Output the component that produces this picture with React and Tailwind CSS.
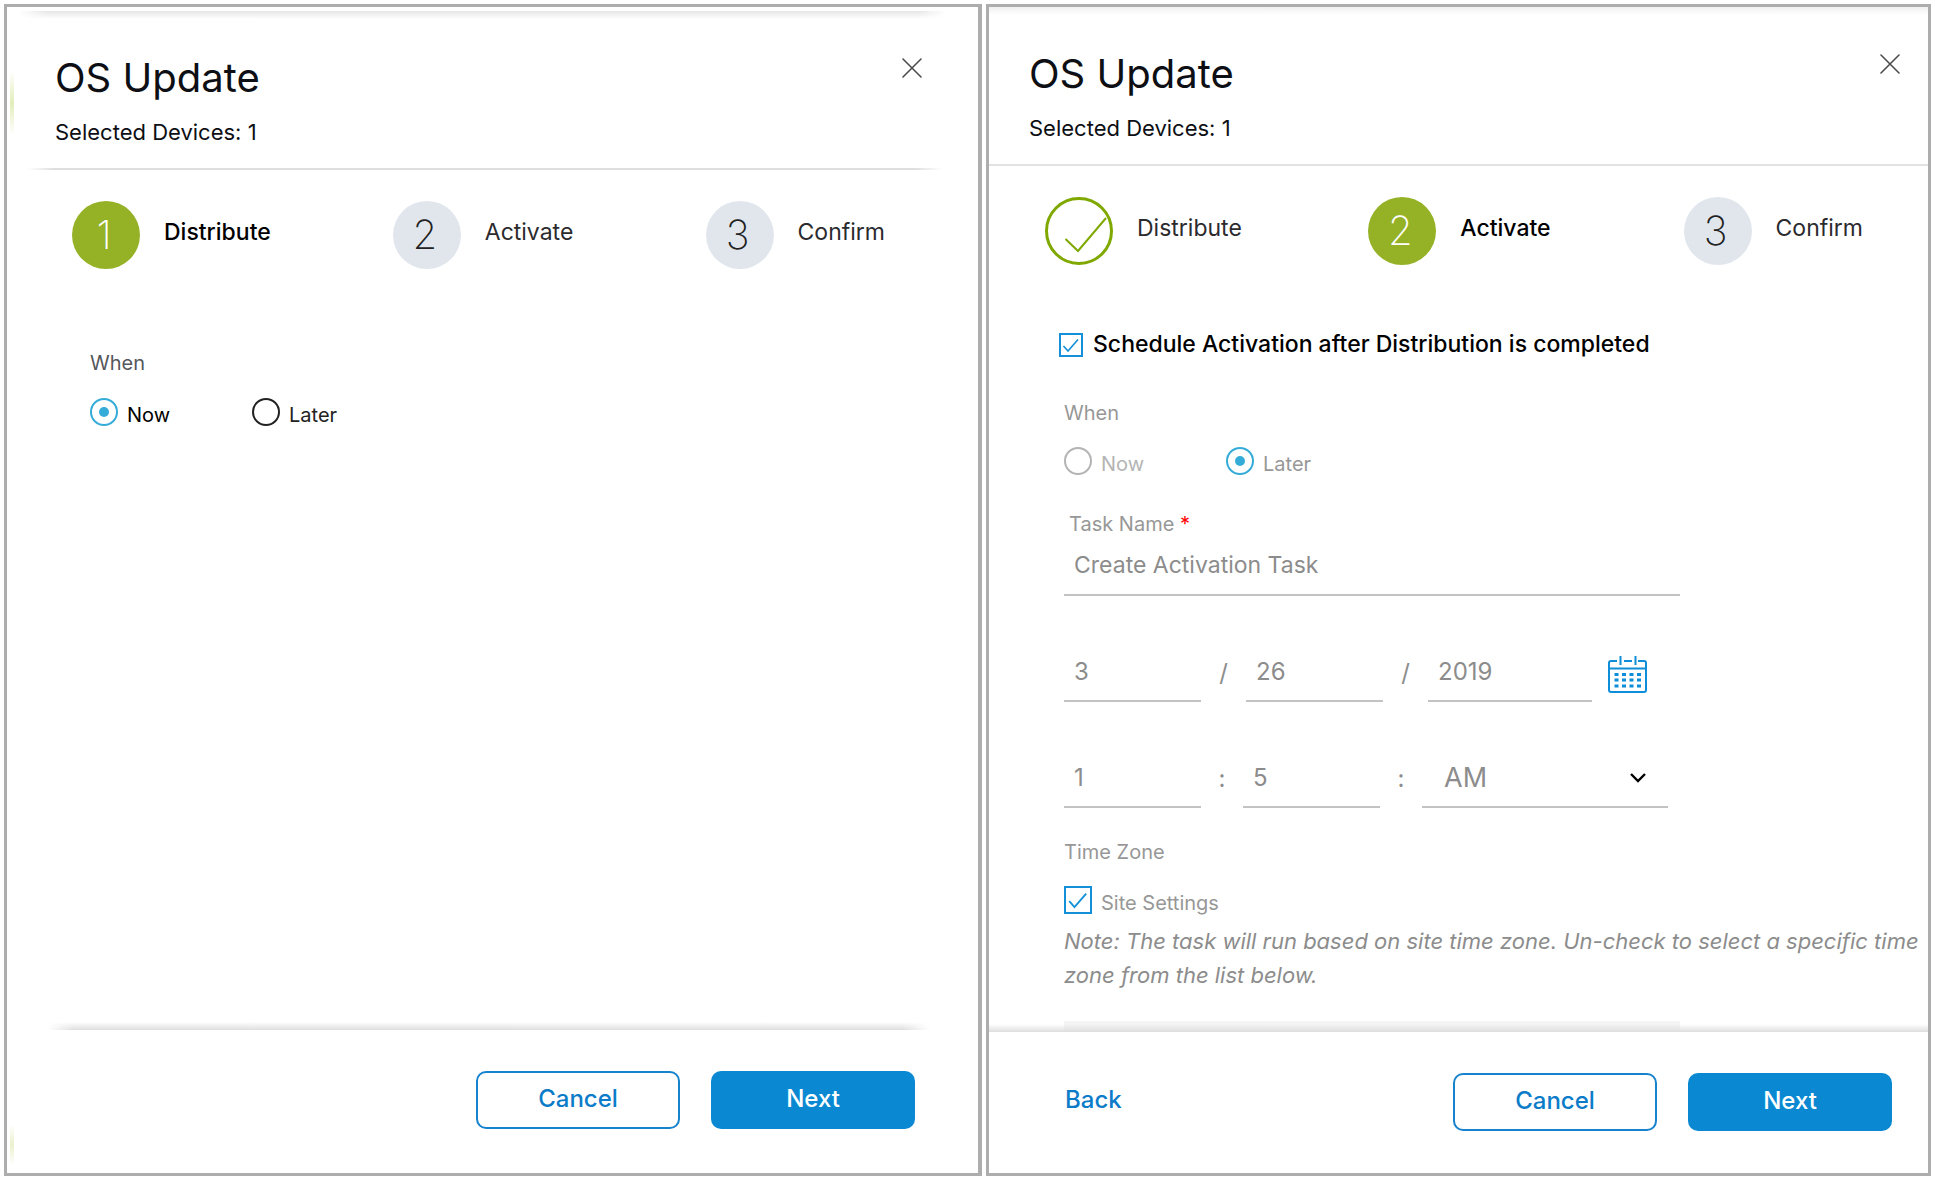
import React, { useState } from 'react'

const steps = ['Distribute', 'Activate', 'Confirm']

function StepCircle({ number, current }) {
  if (number < current) {
    return (
      <svg className="size-[68px] shrink-0" viewBox="0 0 68 68" fill="none" stroke="#7fa800">
        <circle cx="34" cy="34" r="32.5" strokeWidth="3" />
        <path d="M20.5 42 L33 54 L61 21" strokeWidth="2" />
      </svg>
    )
  }

  return (
    <span
      className={`flex size-[68px] shrink-0 items-center justify-center rounded-full pr-1 text-[40px] font-extralight ${
        number === current ? 'bg-[#95b226] text-white' : 'bg-[#e1e6ed] text-[#222222]'
      }`}
    >
      {number}
    </span>
  )
}

function Steps({ current }) {
  return (
    <ol className="mt-[31px] grid grid-cols-[321fr_313fr_auto]">
      {steps.map((step, index) => (
        <li key={step} className="flex items-center gap-6">
          <StepCircle number={index + 1} current={current} />
          <span
            className={`pb-[6px] text-[23px] leading-7 ${
              index + 1 === current ? 'font-medium text-black' : 'text-[#2b2b2e]'
            }`}
          >
            {step}
          </span>
        </li>
      ))}
    </ol>
  )
}

function CloseButton() {
  return (
    <button type="button" aria-label="Close" className="size-5 cursor-pointer">
      <svg viewBox="0 0 20 20" className="size-5" fill="none" stroke="#4d4d4f" strokeWidth="1.6" strokeLinecap="round">
        <path d="M1 1 L19 19 M19 1 L1 19" />
      </svg>
    </button>
  )
}

function Radio({ label, ringClass, textClass, ...props }) {
  return (
    <label className={`flex w-[162px] gap-[9px] text-[20px] leading-7 ${textClass}`}>
      <input
        type="radio"
        className={`grid size-7 shrink-0 appearance-none place-content-center rounded-full border-2 before:size-[10px] before:rounded-full checked:border-[#35acd8] checked:before:bg-[#35acd8] ${ringClass}`}
        {...props}
      />
      <span className="pt-[3px]">{label}</span>
    </label>
  )
}

function Checkbox({ id, sizeClass }) {
  return (
    <span className={`grid shrink-0 ${sizeClass}`}>
      <input
        id={id}
        type="checkbox"
        defaultChecked
        className="peer col-start-1 row-start-1 size-full appearance-none border-2 border-[#1490d8]"
      />
      <svg
        className="pointer-events-none invisible col-start-1 row-start-1 size-full peer-checked:visible"
        viewBox="0 0 24 24"
        fill="none"
        stroke="#1490d8"
        strokeWidth="1.6"
      >
        <path d="M4.5 13 L9 18 L19 6.5" />
      </svg>
    </span>
  )
}

function CalendarIcon() {
  return (
    <svg viewBox="0 0 39 37" className="h-[37px] w-[39px]" fill="none" stroke="#0e8ed8" strokeWidth="2">
      <path d="M9 5 H3 Q1 5 1 7 V12 M16 5 H24 M30 5 H36 Q38 5 38 7 V12" />
      <path d="M12.5 0 V9 M27.5 0 V9" />
      <path d="M1 12.5 H38 V34 Q38 36 36 36 H3 Q1 36 1 34 Z" />
      <path d="M6.5 18.5 H33 M6.5 24 H33 M6.5 30 H33" strokeWidth="3" strokeDasharray="4 3.5" />
    </svg>
  )
}

function Footer({ onBack, lineClass, barClass }) {
  return (
    <div>
      <div className={`-mt-2 h-2 bg-linear-to-b from-transparent to-[#dedede] ${lineClass}`} />
      <div className={`flex items-center gap-[31px] pt-[41px] pl-[76px] text-[24px] ${barClass}`}>
        {onBack && (
          <button type="button" onClick={onBack} className="cursor-pointer pb-1 font-medium text-[#0c7cc9]">
            Back
          </button>
        )}
        <button
          type="button"
          className="ml-auto h-[58px] w-[204px] cursor-pointer rounded-[10px] border-2 border-[#1783cd] pb-[2px] font-medium text-[#0c7cc9]"
        >
          Cancel
        </button>
        <button
          type="button"
          className="h-[58px] w-[204px] cursor-pointer rounded-[10px] bg-[#0a89d2] pb-[2px] font-medium text-white"
        >
          Next
        </button>
      </div>
    </div>
  )
}

function DistributePanel() {
  const [when, setWhen] = useState('now')

  return (
    <section className="relative flex flex-col border-[3px] border-r-4 border-[#adadad]">
      {/* Page edge showing behind the panel  */}
      <span className="absolute top-16 left-[3px] h-16 w-1 bg-linear-to-b from-transparent via-[#e3edbb] to-transparent" />
      <span className="absolute bottom-2 left-[3px] h-10 w-1 bg-linear-to-b from-transparent via-[#eaf1cd] to-transparent" />

      <div className="absolute inset-x-0 top-1 mr-8 ml-3 h-2 bg-linear-to-b from-[#e6e6e6] to-transparent mask-[linear-gradient(to_right,transparent,black_3%,black_97%,transparent)]" />
      <div className="flex items-start justify-between pt-[47px] pr-14 pb-[22px] pl-12">
        <div>
          <h1 className="text-[40px] leading-[48px]">OS Update</h1>
          <p className="mt-4 text-[22px] leading-7">Selected Devices: 1</p>
        </div>
        <div className="pt-1">
          <CloseButton />
        </div>
      </div>
      <div className="mr-9 ml-5 h-[2px] bg-[#dedede] mask-[linear-gradient(to_right,transparent,black_3%,black_97%,transparent)]" />

      <div className="pr-[93px] pl-[65px]">
        <Steps current={1} />
      </div>

      <fieldset className="mt-20 flex-1 pl-[83px]">
        <legend className="text-[20px] leading-7 text-[#55575c]">When</legend>
        <div className="mt-[21px] flex">
          <Radio
            name="distributeWhen"
            label="Now"
            ringClass="border-[#222222]"
            textClass="text-black"
            checked={when === 'now'}
            onChange={() => setWhen('now')}
          />
          <Radio
            name="distributeWhen"
            label="Later"
            ringClass="border-[#222222]"
            textClass="text-[#222222]"
            checked={when === 'later'}
            onChange={() => setWhen('later')}
          />
        </div>
      </fieldset>

      <Footer
        barClass="pr-[63px] pb-11"
        lineClass="mr-12 ml-10 mask-[linear-gradient(to_right,transparent,black_3%,black_97%,transparent)]"
      />
    </section>
  )
}

function ActivatePanel() {
  const [when, setWhen] = useState('later')
  const field = 'h-12 border-b-2 border-[#c3c3c3] bg-transparent pb-3 pl-[10px] leading-8 text-[#8c8c8c] outline-none'

  return (
    <section className="relative flex flex-col border-[3px] border-[#adadad]">
      <div className="absolute inset-x-0 top-0 h-2 bg-linear-to-b from-[#f0f0f0] to-transparent" />
      <div className="flex items-start justify-between border-b-2 border-[#e2e2e2] pt-[43px] pr-7 pb-[22px] pl-10">
        <div>
          <h1 className="text-[40px] leading-[48px]">OS Update</h1>
          <p className="mt-4 text-[22px] leading-7">Selected Devices: 1</p>
        </div>
        <div className="pt-1">
          <CloseButton />
        </div>
      </div>

      <div className="pr-[65px] pl-14">
        <Steps current={2} />
      </div>

      <form className="flex flex-1 flex-col pl-[75px] text-[20px] leading-7 text-[#979797]">
        <div className="mt-16 -ml-[5px] flex h-8 items-center gap-[10px]">
          <Checkbox id="schedule" sizeClass="size-6" />
          <label htmlFor="schedule" className="pb-[2px] text-[23px] font-medium text-black">
            Schedule Activation after Distribution is completed
          </label>
        </div>

        <fieldset className="mt-[38px]">
          <legend>When</legend>
          <div className="mt-5 flex">
            <Radio
              name="activateWhen"
              label="Now"
              ringClass="border-[#b4b4b4]"
              textClass="text-[#b4b4b4]"
              checked={when === 'now'}
              onChange={() => setWhen('now')}
            />
            <Radio
              name="activateWhen"
              label="Later"
              ringClass="border-[#b4b4b4]"
              textClass="text-[#979797]"
              checked={when === 'later'}
              onChange={() => setWhen('later')}
            />
          </div>
        </fieldset>

        <label htmlFor="taskName" className="mt-8 pl-[5px]">
          Task Name <span className="text-[#ff0000]">*</span>
        </label>
        <input
          id="taskName"
          type="text"
          defaultValue="Create Activation Task"
          className={`mt-[10px] w-[616px] text-[23px] ${field}`}
        />

        {/* Date  */}
        <div className="mt-[58px] flex items-center text-[24px] text-[#8c8c8c]">
          <input aria-label="Month" type="text" defaultValue="3" className={`w-[137px] ${field}`} />
          <span className="w-[45px] pb-[10px] text-center">/</span>
          <input aria-label="Day" type="text" defaultValue="26" className={`w-[137px] ${field}`} />
          <span className="w-[45px] pb-[10px] text-center">/</span>
          <input aria-label="Year" type="text" defaultValue="2019" className={`w-[164px] ${field}`} />
          <button type="button" aria-label="Open calendar" className="ml-4 flex cursor-pointer pb-2">
            <CalendarIcon />
          </button>
        </div>

        {/* Time  */}
        <div className="mt-[58px] flex items-center text-[24px] text-[#8c8c8c]">
          <input aria-label="Hour" type="text" defaultValue="1" className={`w-[137px] ${field}`} />
          <span className="w-[42px] pb-[10px] text-center">:</span>
          <input aria-label="Minute" type="text" defaultValue="5" className={`w-[137px] ${field}`} />
          <span className="w-[42px] pb-[10px] text-center">:</span>
          <div className="relative">
            <select
              aria-label="AM or PM"
              className="block h-12 w-[246px] appearance-none border-b-2 border-[#c3c3c3] pt-[2px] pb-3 pl-[22px] text-[27px] leading-8 outline-none"
            >
              <option>AM</option>
              <option>PM</option>
            </select>
            <svg
              className="pointer-events-none absolute top-3 right-[22px] h-3 w-4"
              viewBox="0 0 16 12"
              fill="none"
              stroke="#000000"
              strokeWidth="2.4"
            >
              <path d="M1 2 L8 9 L15 2" />
            </svg>
          </div>
        </div>

        <p className="mt-[30px]">Time Zone</p>
        <div className="mt-5 flex gap-[9px]">
          <Checkbox id="siteSettings" sizeClass="size-7" />
          <label htmlFor="siteSettings" className="pt-[3px]">Site Settings</label>
        </div>
        <p className="mt-[7px] text-[22px] leading-[34px] text-[#8c8c8c] italic">
          Note: The task will run based on site time zone. Un-check to select a specific time zone from the list below.
        </p>
        <div className="mt-[29px] w-[616px] flex-1 bg-[#f4f4f4]" />
      </form>

      <Footer onBack={() => {}} barClass="pr-9 pb-[42px]" lineClass="" />
    </section>
  )
}

function App() {
  return (
    <main className="grid min-h-screen grid-cols-[978fr_945fr] gap-1 bg-white p-1 font-['Inter',sans-serif] text-[#0d0f14]">
      <DistributePanel />
      <ActivatePanel />
    </main>
  )
}

export default App
